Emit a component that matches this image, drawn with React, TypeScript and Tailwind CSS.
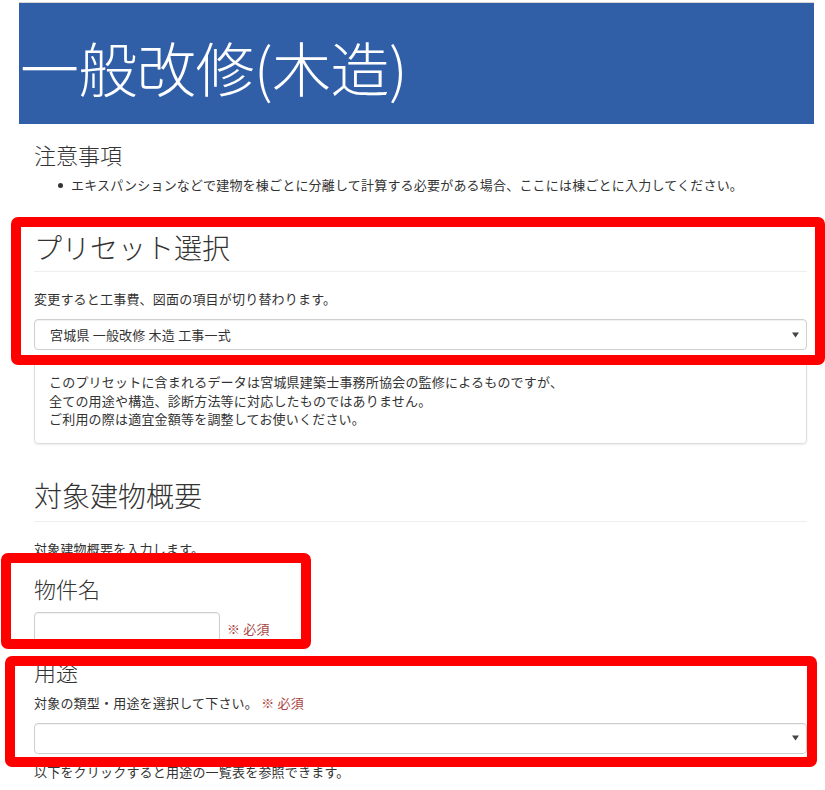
import React from "react";

const FONT = '"Noto Sans CJK JP", "Noto Sans", sans-serif';

function Arrow() {
  return (
    <svg width="7" height="6" viewBox="0 0 7 6" className="shrink-0">
      <path d="M0 0.5 L7 0.5 L3.5 5.5 Z" fill="#444" />
    </svg>
  );
}

function Select({ text }: { text?: string }) {
  return (
    <div className="flex h-[31px] w-[773px] items-center justify-between rounded-[4px] border border-[#cfcfcf] bg-white pl-[15px] pr-[7px] shadow-[inset_0_1px_1px_rgba(0,0,0,0.06)]">
      <span className="text-[13px] leading-[18px] tracking-[0.2px] text-[#333]">{text ?? ""}</span>
      <Arrow />
    </div>
  );
}

export default function App() {
  return (
    <div
      className="relative h-[790px] w-[825px] overflow-hidden bg-white text-[#333]"
      style={{ fontFamily: FONT }}
    >
      <div className="pt-[2px]">
        <div className="ml-[19px] h-[1px] w-[795px] bg-[#d6d6d6]" />
        <div className="ml-[19px] flex h-[121px] w-[795px] items-center bg-[#305fa8] pl-[1px] pt-[6px]">
          <h1 className="text-[59px] font-light leading-none tracking-[-0.5px] text-white">
            一般改修(木造)
          </h1>
        </div>
      </div>

      <div className="ml-[34px] w-[773px] tracking-[0.2px]">
        <h4 className="mt-[18px] text-[22px] font-light leading-[24px] tracking-normal">注意事項</h4>
        <ul className="mt-[10px]">
          <li className="flex items-center text-[13px] leading-[18px]">
            <span className="ml-[24px] mr-[8px] h-[5px] w-[5px] rounded-full bg-[#333]" />
            エキスパンションなどで建物を棟ごとに分離して計算する必要がある場合、ここには棟ごとに入力してください。
          </li>
        </ul>

        <h3 className="mt-[37px] text-[28px] font-light leading-[32px] tracking-normal">プリセット選択</h3>
        <div className="mt-[8px] h-[1px] bg-[#eeeeee]" />
        <p className="mt-[18px] text-[13px] leading-[18px]">変更すると工事費、図面の項目が切り替わります。</p>
        <div className="mt-[11px]">
          <Select text="宮城県 一般改修 木造 工事一式" />
        </div>
        <div className="mt-[8px] rounded-[4px] border border-[#dddddd] px-[14px] py-[14px] shadow-[0_1px_2px_rgba(0,0,0,0.08)]">
          <p className="text-[13px] leading-[18.5px]">
            このプリセットに含まれるデータは宮城県建築士事務所協会の監修によるものですが、
            <br />
            全ての用途や構造、診断方法等に対応したものではありません。
            <br />
            ご利用の際は適宜金額等を調整してお使いください。
          </p>
        </div>

        <h3 className="mt-[35px] text-[28px] font-light leading-[32px] tracking-normal">対象建物概要</h3>
        <div className="mt-[10px] h-[1px] bg-[#eeeeee]" />
        <p className="mt-[18px] text-[13px] leading-[18px]">対象建物概要を入力します。</p>

        <h4 className="mt-[18px] text-[22px] font-light leading-[24px] tracking-normal">物件名</h4>
        <div className="mt-[12px] flex items-center gap-[7px]">
          <div className="h-[34px] w-[186px] rounded-[4px] border border-[#cfcfcf] bg-white shadow-[inset_0_1px_1px_rgba(0,0,0,0.06)]" />
          <span className="text-[13px] leading-[18px] text-[#a94442]">※ 必須</span>
        </div>

        <h4 className="mt-[13px] text-[22px] font-light leading-[24px] tracking-normal">用途</h4>
        <p className="mt-[11px] text-[13px] leading-[18px]">
          対象の類型・用途を選択して下さい。 <span className="text-[#a94442]">※ 必須</span>
        </p>
        <div className="mt-[11px]">
          <Select />
        </div>
        <p className="mt-[9px] text-[13px] leading-[18px]">以下をクリックすると用途の一覧表を参照できます。</p>
      </div>

      {/* red annotation frames */}
      <div className="pointer-events-none absolute left-[11px] top-[217px] h-[148px] w-[814px] rounded-[7px] border-[10px] border-[#ff0000]" />
      <div className="pointer-events-none absolute left-[1px] top-[553px] h-[96px] w-[310px] rounded-[7px] border-[10px] border-[#ff0000]" />
      <div className="pointer-events-none absolute left-[5px] top-[656px] h-[111px] w-[812px] rounded-[7px] border-[10px] border-[#ff0000]" />
    </div>
  );
}
